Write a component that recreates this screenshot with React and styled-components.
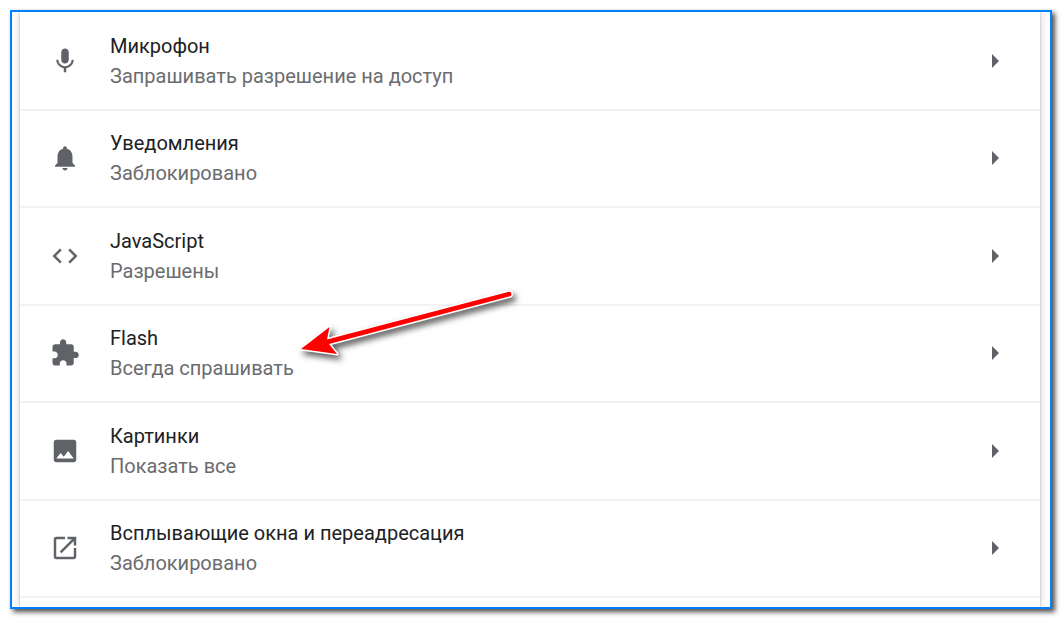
import styled, { createGlobalStyle } from "styled-components";

const colors = {
  frame: "#0080ff",
  title: "#202124",
  subtitle: "#6a6c6f",
  icon: "#5f6368",
  line: "#f2f2f2",
  arrow: "#ff0000",
};

const GlobalStyle = createGlobalStyle`
  * {
    box-sizing: border-box;
  }

  body {
    margin: 0;
    background: #fff;
    font-family: Roboto, "Liberation Sans", sans-serif;
  }
`;

const Page = styled.main`
  padding: 10px 11px 11px 10px;
  overflow: hidden;
`;

const Frame = styled.div`
  position: relative;
  border: 2px solid ${colors.frame};
  background: #fff;
  box-shadow: 3px 3px 5px rgba(0, 0, 0, 0.7);
`;

const Gutter = styled.div`
  padding: 0 10px 0 8px;
  overflow: hidden;
  background: #fdfdfd;
`;

const List = styled.ul`
  margin: 0;
  padding: 1px 0 9px;
  list-style: none;
  background: #fff;
  box-shadow: 0 0 2px rgba(60, 64, 67, 0.35), 0 0 8px rgba(60, 64, 67, 0.2);
`;

const Item = styled.li`
  display: flex;
  min-height: 98px;
  border-bottom: 2px solid ${colors.line};

  &:nth-child(even) {
    min-height: 97px;
    padding-bottom: 1px;
  }
`;

const RowButton = styled.button`
  display: flex;
  flex: 1;
  align-items: center;
  gap: 30px;
  padding: 0 30px;
  border: 0;
  background: transparent;
  font: inherit;
  text-align: left;
  cursor: pointer;
`;

const Icon = styled.svg`
  flex: none;
  width: 30px;
  height: 30px;
  fill: ${colors.icon};
`;

const Labels = styled.span`
  flex: 1;
  min-width: 0;
`;

const Title = styled.span`
  display: block;
  color: ${colors.title};
  font-size: 20px;
  line-height: 30px;
`;

const Subtitle = styled(Title)`
  color: ${colors.subtitle};
`;

const Pointer = styled.svg`
  position: absolute;
  left: 278px;
  top: 268px;
  width: 240px;
  height: 90px;
  pointer-events: none;
  filter: drop-shadow(3px 4px 3px rgba(0, 0, 0, 0.65));
`;

const items = [
  {
    title: "Микрофон",
    subtitle: "Запрашивать разрешение на доступ",
    path: "M12 14c1.66 0 2.99-1.34 2.99-3L15 5c0-1.66-1.34-3-3-3S9 3.34 9 5v6c0 1.66 1.34 3 3 3zm5.3-3c0 3-2.54 5.1-5.3 5.1S6.7 14 6.7 11H5c0 3.41 2.72 6.23 6 6.72V21h2v-3.28c3.28-.48 6-3.3 6-6.72h-1.7z",
  },
  {
    title: "Уведомления",
    subtitle: "Заблокировано",
    path: "M12 22c1.1 0 2-.9 2-2h-4c0 1.1.89 2 2 2zm6-6v-5c0-3.07-1.64-5.64-4.5-6.32V4c0-.83-.67-1.5-1.5-1.5s-1.5.67-1.5 1.5v.68C7.63 5.36 6 7.92 6 11v5l-2 2v1h16v-1l-2-2z",
  },
  {
    title: "JavaScript",
    subtitle: "Разрешены",
    path: "M9.4 16.6L4.8 12l4.6-4.6L8 6l-6 6 6 6 1.4-1.4zm5.2 0l4.6-4.6-4.6-4.6L16 6l6 6-6 6-1.4-1.4z",
  },
  {
    title: "Flash",
    subtitle: "Всегда спрашивать",
    path: "M20.5 11H19V7c0-1.1-.9-2-2-2h-4V3.5C13 2.12 11.88 1 10.5 1S8 2.12 8 3.5V5H4c-1.1 0-1.99.9-1.99 2v3.8H3.5c1.49 0 2.7 1.21 2.7 2.7s-1.21 2.7-2.7 2.7H2V20c0 1.1.9 2 2 2h3.8v-1.5c0-1.49 1.21-2.7 2.7-2.7 1.49 0 2.7 1.21 2.7 2.7V22H17c1.1 0 2-.9 2-2v-4h1.5c1.38 0 2.5-1.12 2.5-2.5S21.88 11 20.5 11z",
  },
  {
    title: "Картинки",
    subtitle: "Показать все",
    path: "M21 19V5c0-1.1-.9-2-2-2H5c-1.1 0-2 .9-2 2v14c0 1.1.9 2 2 2h14c1.1 0 2-.9 2-2zM8.5 13.5l2.5 3.01L14.5 12l4.5 6H5l3.5-4.5z",
  },
  {
    title: "Всплывающие окна и переадресация",
    subtitle: "Заблокировано",
    path: "M19 19H5V5h7V3H5c-1.11 0-2 .9-2 2v14c0 1.1.89 2 2 2h14c1.1 0 2-.9 2-2v-7h-2v7zM14 3v2h3.59l-9.83 9.83 1.41 1.41L19 6.41V10h2V3h-7z",
  },
];

const SettingRow = ({ item }) => {
  return (
    <Item>
      <RowButton type="button">
        <Icon viewBox="0 0 24 24" aria-hidden="true">
          <path d={item.path} />
        </Icon>
        <Labels>
          <Title>{item.title}</Title>
          <Subtitle>{item.subtitle}</Subtitle>
        </Labels>
        <Icon viewBox="0 0 30 30" aria-hidden="true">
          <path d="M12 8v14l7-7z" />
        </Icon>
      </RowButton>
    </Item>
  );
};

const App = () => {
  return (
    <Page>
      <GlobalStyle />
      <Frame>
        <Gutter>
          <List>
            {items.map((item) => (
              <SettingRow key={item.title} item={item} />
            ))}
          </List>
        </Gutter>
        <Pointer viewBox="290 280 240 90" aria-hidden="true">
          <path
            d="M301 349L329.5 327L327 339.5L509 291.8Q511 291.5 511.3 293.5Q512 295.8 510 296.3L329 344L337 354Z"
            fill={colors.arrow}
            stroke="#fff"
            strokeWidth="3"
            strokeLinejoin="round"
            paintOrder="stroke"
          />
        </Pointer>
      </Frame>
    </Page>
  );
};

export default App;
